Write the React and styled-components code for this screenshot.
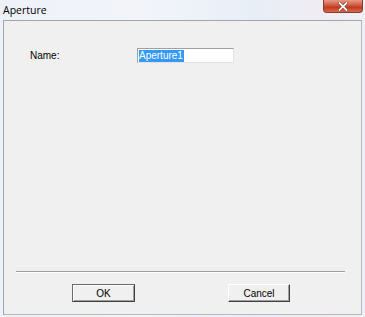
import React from "react";
import styled, { createGlobalStyle } from "styled-components";

const Global = createGlobalStyle`
  html, body { margin: 0; padding: 0; background: #e9eef5; }
  body { width: 365px; height: 317px; overflow: hidden; }
`;

const Window = styled.div`
  width: 365px;
  height: 317px;
  display: flex;
  flex-direction: column;
  box-sizing: border-box;
  padding: 0 3px 2px 3px;
  background: linear-gradient(90deg, #eef2f8 0%, #f2f4fa 40%, #e8eef7 70%, #f1ecf3 88%, #eef1f7 100%);
`;

const TitleBar = styled.div`
  height: 20px;
  display: flex;
  justify-content: space-between;
  align-items: flex-start;
  flex-shrink: 0;
`;

const Title = styled.div`
  font-family: "Open Sans", "Noto Sans", sans-serif;
  font-size: 10.5px;
  color: #000;
  line-height: 14px;
  padding-top: 3px;
`;

const CloseButton = styled.div`
  width: 40px;
  height: 13px;
  margin-right: -1px;
  box-sizing: border-box;
  border: 1px solid #8a3a2a;
  border-top: none;
  border-radius: 0 0 4px 4px;
  background: linear-gradient(180deg, #e69a86 0%, #d0573d 45%, #c03a1f 60%, #d86a4e 100%);
  display: flex;
  align-items: center;
  justify-content: center;
`;

const Client = styled.div`
  flex: 1;
  background: #f0f0f0;
  border: 1px solid #a5a5a5;
  border-right-color: #b9b9b9;
  border-bottom-color: #b9b9b9;
  display: flex;
  flex-direction: column;
  font-family: "Liberation Sans", Arial, sans-serif;
  font-size: 10px;
  color: #000;
`;

const FormRow = styled.div`
  display: flex;
  align-items: center;
  padding: 27px 0 0 26px;
`;

const Label = styled.span`
  width: 107px;
  line-height: 13px;
`;

const Field = styled.div`
  width: 97px;
  height: 15px;
  box-sizing: border-box;
  background: #fff;
  border-top: 1px solid #a0a0a0;
  border-left: 1px solid #a0a0a0;
  border-right: 1px solid #e3e3e3;
  border-bottom: 1px solid #e3e3e3;
  display: flex;
  align-items: center;
  padding-left: 1px;
`;

const Selected = styled.span`
  background: #3399ff;
  color: #fff;
  line-height: 12px;
  padding: 0 1px 0 0;
`;

const Spacer = styled.div`
  flex: 1;
`;

const Separator = styled.div`
  margin: 0 16px 0 12px;
  height: 0;
  border-top: 1px solid #a0a0a0;
  border-bottom: 1px solid #ffffff;
`;

const ButtonRow = styled.div`
  display: flex;
  padding: 11px 0 12px 0;
`;

const Button = styled.div`
  width: ${p => p.$w}px;
  height: 18px;
  box-sizing: border-box;
  margin-left: ${p => p.$ml}px;
  display: flex;
  align-items: center;
  justify-content: center;
  background: #f0f0f0;
  border-top: 1px solid ${p => (p.$default ? "#6a6a6a" : "#ffffff")};
  border-left: 1px solid ${p => (p.$default ? "#6a6a6a" : "#ffffff")};
  border-right: 1px solid #404040;
  border-bottom: 1px solid #404040;
  box-shadow: ${p => (p.$default
    ? "inset 1px 1px 0 #ffffff, inset -1px -1px 0 #a0a0a0"
    : "inset -1px -1px 0 #a0a0a0")};
  line-height: 13px;
`;

export default function App() {
  return (
    <>
      <Global />
      <Window>
        <TitleBar>
          <Title>Aperture</Title>
          <CloseButton>
            <svg width="10" height="9" viewBox="0 0 10 9">
              <path d="M1.5 1 L8.5 8 M8.5 1 L1.5 8" stroke="#7a2a1a" strokeWidth="3" strokeLinecap="square" />
              <path d="M1.5 1 L8.5 8 M8.5 1 L1.5 8" stroke="#ffffff" strokeWidth="1.8" strokeLinecap="square" />
            </svg>
          </CloseButton>
        </TitleBar>
        <Client>
          <FormRow>
            <Label>Name:</Label>
            <Field>
              <Selected>Aperture1</Selected>
            </Field>
          </FormRow>
          <Spacer />
          <Separator />
          <ButtonRow>
            <Button $w={63} $ml={68} $default>OK</Button>
            <Button $w={62} $ml={93}>Cancel</Button>
          </ButtonRow>
        </Client>
      </Window>
    </>
  );
}
